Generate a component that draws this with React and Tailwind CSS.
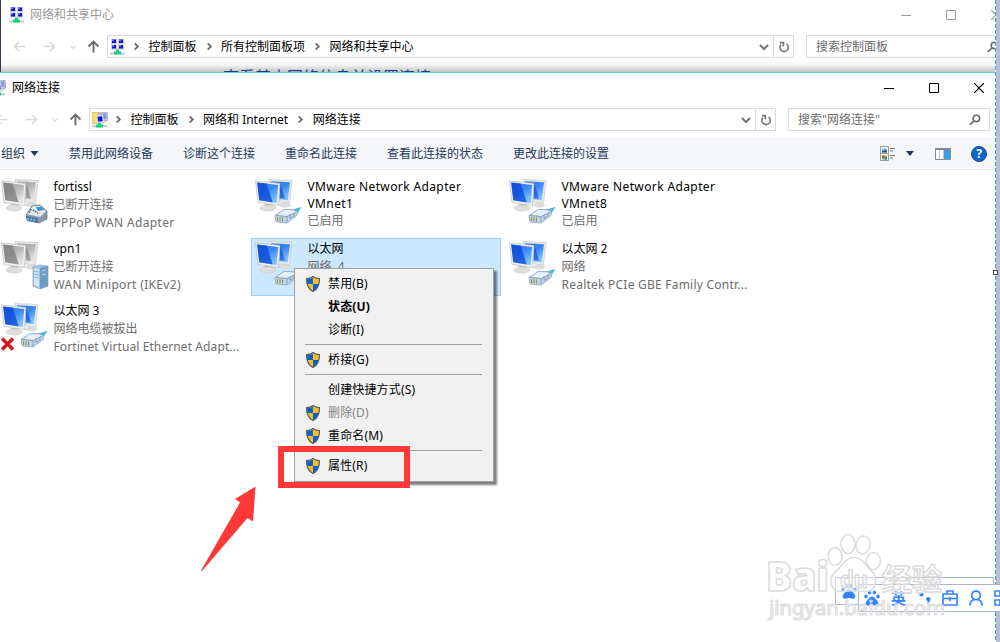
import clsx from "clsx";

const adapters = [
  { name: "fortissl", status: "已断开连接", device: "PPPoP WAN Adapter", kind: "phone" },
  { name: "VMware Network Adapter VMnet1", status: "已启用", kind: "cable" },
  { name: "VMware Network Adapter VMnet8", status: "已启用", kind: "cable" },
  { name: "vpn1", status: "已断开连接", device: "WAN Miniport (IKEv2)", kind: "server" },
  { name: "以太网", status: "网络  4", device: "", kind: "cable", selected: true },
  { name: "以太网 2", status: "网络", device: "Realtek PCIe GBE Family Contr...", kind: "cable", tracking: "tracking-[0.23px]" },
  { name: "以太网 3", status: "网络电缆被拔出", device: "Fortinet Virtual Ethernet Adapt...", kind: "cable", tracking: "tracking-[0.1px]", unplugged: true },
];

const menuItems = [
  { label: "禁用(B)", shield: true },
  { label: "状态(U)", bold: true },
  { label: "诊断(I)" },
  null,
  { label: "桥接(G)", shield: true },
  null,
  { label: "创建快捷方式(S)" },
  { label: "删除(D)", shield: true, disabled: true },
  { label: "重命名(M)", shield: true },
  null,
  { label: "属性(R)", shield: true },
];

const NetworkIcon = () => (
  <svg className="w-4 h-4 shrink-0" viewBox="0 0 16 16">
    {[[1, 0], [8, 0], [1, 5.5], [8, 5.5]].map(([x, y]) => (
      <g key={`${x}-${y}`}>
        <rect x={x} y={y} width="6.300" height="5" fill="#c9ccd6" />
        <rect x={x + 1} y={y + 0.5} width="4" height="3.500" fill="#1818c4" />
        <rect x={x + 1} y={y + 0.5} width="2" height="1.500" fill="#6f83e8" />
      </g>
    ))}
    <path d="M0 13.500h15v2H0z" fill="#c4c8cc" />
    <path d="M6 10.500h3v2h2v3H4v-3h2z" fill="#14cf80" />
  </svg>
);

const ConnectionsIcon = ({ className }) => (
  <svg className={clsx("w-4 h-4 shrink-0", className)} viewBox="0 0 16 16">
    <path d="M0 .5h7v11H0z" fill="#f5dc78" stroke="#d9b84c" strokeWidth=".7" />
    <path d="M6 1l9-1 .8 8-6 3-3-2z" fill="#bfc4d0" stroke="#8e94a3" strokeWidth=".6" />
    <path d="M9 2l5-.6.5 5-5 1.400z" fill="#7e97e8" />
    <path d="M4 3.500l7-1 1 7.500-7 1.200z" fill="#d9dce6" />
    <path d="M5.500 4.800l4.500-.6.700 4.800-4.500.7z" fill="#1519cb" />
    <path d="M0 13.200h15v2H0z" fill="#c4c8cc" />
    <path d="M6 11h3v1.500h2v3H4v-3h2z" fill="#14cf80" />
  </svg>
);

const ArrowIcon = ({ dir, className }) => (
  <svg className={clsx("w-[13px] h-[13px] shrink-0", className)} viewBox="0 0 13 13" fill="none" stroke="currentColor" strokeWidth="1.500">
    {dir === "left" && <path d="M12.500 6.500H1.500M6 2L1.500 6.500 6 11" />}
    {dir === "right" && <path d="M.5 6.500h11M7 2l4.500 4.500L7 11" />}
    {dir === "up" && <path d="M6.500 12.500V1.500M1.500 6.500l5-5 5 5" strokeWidth="1.900" />}
  </svg>
);

const Chevron = ({ down, className }) => (
  <svg className={clsx("shrink-0", className)} viewBox="0 0 10 10" fill="none" stroke="currentColor" strokeWidth="2">
    {down ? <path d="M1 3l4 4 4-4" /> : <path d="M3 1.500L6.500 5 3 8.500" />}
  </svg>
);

const RefreshIcon = () => (
  <svg className="w-3 h-3" viewBox="0 0 12 12" fill="none" stroke="#757575" strokeWidth="1.600">
    <path d="M8.500 2.900A4.200 4.200 0 1 1 3 3.600" />
    <path d="M1.800 1.600h3.600v3.800" />
  </svg>
);

const SearchIcon = () => (
  <svg className="w-3 h-3 shrink-0" viewBox="0 0 12 12" fill="none" stroke="#6b6b6b" strokeWidth="1.600">
    <circle cx="7.400" cy="4.400" r="3.200" />
    <path d="M5 6.900L.8 11" />
  </svg>
);

const WindowButtons = ({ className }) => (
  <div className={clsx("flex items-center gap-[35px]", className)}>
    <svg className="w-[10px] h-[10px] shrink-0" viewBox="0 0 10 10" stroke="currentColor"><path d="M0 5.500h10" /></svg>
    <svg className="w-[10px] h-[10px] shrink-0" viewBox="0 0 10 10" fill="none" stroke="currentColor"><path d="M.5.5h9v9h-9z" /></svg>
    <svg className="w-[10px] h-[10px] shrink-0" viewBox="0 0 10 10" stroke="currentColor" strokeWidth="1.200"><path d="M0 0l10 10M10 0L0 10" /></svg>
  </div>
);

const AddressBar = ({ icon, crumbs, search, searchClass }) => (
  <div className="flex h-[23px] shrink-0 items-center">
    <div className="flex w-[107px] shrink-0 items-center text-[#d8d8d8]">
      <ArrowIcon dir="left" className="ml-[13px]" />
      <ArrowIcon dir="right" className="ml-[17px]" />
      <Chevron down className="ml-[14px] h-[6px] w-[6px]" />
      <ArrowIcon dir="up" className="ml-[11px] text-[#6d6d6d]" />
    </div>
    <div className="flex h-[23px] w-[687px] shrink-0 border border-[#d9d9d9] bg-white">
      <div className="flex flex-1 items-center pl-[2px]">
        {icon}
        {crumbs.map((crumb) => (
          <div key={crumb} className="flex items-center">
            <Chevron className="ml-[6px] mr-[7.500px] h-[9px] w-[9px] text-[#6d6d6d]" />
            <span className="mr-[2px] whitespace-nowrap">{crumb}</span>
          </div>
        ))}
      </div>
      <div className="flex w-[19px] items-center justify-center">
        <Chevron down className="h-[10px] w-[10px] text-[#757575]" />
      </div>
      <div className="flex w-5 items-center justify-center border-l border-[#d9d9d9]">
        <RefreshIcon />
      </div>
    </div>
    <div className={clsx("ml-3 flex h-[23px] shrink-0 items-center justify-between border border-[#d9d9d9] pl-[9px] pr-[8px] text-[#6d6d6d]", searchClass)}>
      <span>{search}</span>
      <SearchIcon />
    </div>
  </div>
);

const Shield = () => (
  <svg className="h-4 w-4" viewBox="0 0 16 16">
    <path d="M8 .5c2 1.500 4 2 6.500 2.200C14.500 9 13 13 8 15.500 3 13 1.500 9 1.500 2.700 4 2.500 6 2 8 .5z" fill="#f9b92c" stroke="#555b61" strokeWidth="1.200" />
    <path d="M7.900 1.500V8H2.400C2.100 6.500 2 5 2 3.300c2-.2 4-.7 5.900-1.800z" fill="#0b62c4" />
    <path d="M8 8h5.600c-.7 3.200-2.500 5.300-5.600 6.900z" fill="#0b62c4" />
  </svg>
);

const Plug = () => (
  <g>
    <path d="M38 33.500q4-3 9.500-3.500l-3 4.500-4 2z" fill="#46b9dc" />
    <path d="M21 38.500l9-6h9l5 2-1 4-10 7.500-11-1z" fill="#c3d5e8" stroke="#7f9cbd" strokeWidth=".7" />
    <path d="M30 33l8 .5 4 1.500-8 4-10-1z" fill="#e6f0f9" />
    <path d="M22 38.500l11 1 9.500-4.500M33 40v5M36 37.500v4l4-2.500v-3" fill="none" stroke="#7491b3" strokeWidth=".8" />
    <path d="M23.500 40v4M26 40.200v4M28.500 40.500v4" stroke="#8f9a52" strokeWidth="1.200" />
  </g>
);

const Phone = () => (
  <g>
    <path d="M26 38l6-9 8-1 7 6v8l-8 4-12-3z" fill="#8d9aa6" stroke="#5e6d7b" strokeWidth=".7" />
    <path d="M27 37l6-8 7 0 6 5-6 6z" fill="#e2e8ec" />
    <path d="M36 30l6 0 2 3-6 1z" fill="#2f95da" />
    <path d="M31 32l-2 4M33 33l5 3" stroke="#4a535d" strokeWidth="1.500" strokeDasharray="1.500 1" />
    <path d="M26 39l12 2v5l-11-2z" fill="#497ca6" />
    <path d="M28 41v2M31 41.500v2M34 42v2" stroke="#a9e1ff" />
  </g>
);

const Server = () => (
  <g>
    <path d="M33 28l7-2 8 1v20l-8 3-7-3z" fill="#9fc4df" stroke="#7897b1" strokeWidth=".6" />
    <path d="M40 29l8-2v20l-8 3z" fill="#6d9cc4" />
    <path d="M34 29l5 1v18l-5-2z" fill="#d4e8f4" />
    <path d="M34 32l5 1M34 35l5 1M34 38l5 1" stroke="#6f9ec0" strokeWidth=".8" />
    <path d="M42 32l4-1M42 36l4-1" stroke="#b8d9ef" />
  </g>
);

const AdapterIcon = ({ kind, unplugged }) => {
  const off = kind !== "cable";
  const id = off ? "screenOff" : "screenOn";
  return (
    <svg className="h-[52px] w-[52px] shrink-0 overflow-visible" viewBox="0 0 52 52">
      <defs>
        <linearGradient id="screenOn" x1="0" y1="0" x2=".6" y2="1">
          <stop offset="0" stopColor="#2f7cf0" />
          <stop offset=".5" stopColor="#3b86f6" />
          <stop offset="1" stopColor="#7fc4ff" />
        </linearGradient>
        <linearGradient id="screenOff" x1="0" y1="0" x2=".6" y2="1">
          <stop offset="0" stopColor="#a2a2a2" />
          <stop offset=".5" stopColor="#b5b5b5" />
          <stop offset="1" stopColor="#e4e4e4" />
        </linearGradient>
      </defs>
      <ellipse cx="31" cy="28" rx="6" ry="2.500" fill="#dcdcdc" />
      <path d="M15 2.500l23 1-2.500 22.500-19-2z" fill="#e9eae8" stroke="#c6c8c6" strokeWidth=".7" />
      <path d="M17 4.300l19 1-2.200 18-16-2z" fill={`url(#${id})`} />
      <path d="M26 4.800l5 17-5-.5z" fill={off ? "#777" : "#0a46d4"} opacity=".6" />
      <path d="M11 27h7l1 4H9z" fill="#b9bab9" />
      <ellipse cx="14" cy="31" rx="8" ry="3" fill="#dedfdd" stroke="#c6c7c6" strokeWidth=".6" />
      <path d="M1.500 3.800l24.500 2.700L24.500 28.500 4 25.500z" fill="#f0f1ef" stroke="#bbbdbb" strokeWidth=".7" />
      <path d="M3.200 5.500l21 2.400L22.700 26 5.300 23.300z" fill={`url(#${id})`} />
      <path d="M3.200 5.500l9.500 1.100 6 18.800L5.300 23.300z" fill={off ? "#7c7c7c" : "#0a46d4"} opacity=".75" />
      {kind === "cable" && <Plug />}
      {kind === "phone" && <Phone />}
      {kind === "server" && <Server />}
      {unplugged && <path d="M2 37.500l11 11M13 37.500L2 48.500" stroke="#d9151b" strokeWidth="3.400" />}
    </svg>
  );
};

const Adapter = ({ name, status, device, kind, selected, unplugged, tracking = "tracking-[0.35px]" }) => (
  <div className={clsx("flex h-[58px] border pl-[2px]", selected ? "border-[#99d1ff] bg-[#cce8ff]" : "border-transparent")}>
    <AdapterIcon kind={kind} unplugged={unplugged} />
    <div className="ml-[1.500px] w-[190px] pt-px text-[12px] leading-[18px] text-[#6d6d6d]">
      <div className={clsx("text-black", name.length > 20 && "leading-[17px] tracking-[0.38px]")}>{name}</div>
      <div className="whitespace-pre">{status}</div>
      <div className={clsx("whitespace-nowrap", tracking)}>{device}</div>
    </div>
  </div>
);

const ContextMenu = () => (
  <div className="absolute left-[294px] top-[268px] w-[200px] border border-[#a0a0a0] bg-[#f1f1f1] pb-[4px] pt-[3px] text-[12px] text-black shadow-[3px_3px_2px_rgba(0,0,0,0.5)]">
    {menuItems.map((item, i) =>
      item ? (
        <div key={item.label} className={clsx("flex h-[23px] items-center", item.bold && "font-bold", item.disabled && "text-[#858585]")}>
          <div className="ml-[10px] w-[23px]">{item.shield && <Shield />}</div>
          <span className="pt-px tracking-[0.15px]">{item.label}</span>
        </div>
      ) : (
        <div key={i} className="ml-[10px] mr-[11px] flex h-[7px] items-center">
          <div className="h-px w-full bg-[#a0a0a0]" />
        </div>
      )
    )}
  </div>
);

const Paw = ({ className }) => (
  <svg className={className} viewBox="0 0 16 16" fill="currentColor">
    <ellipse cx="2" cy="6.500" rx="1.700" ry="2" />
    <ellipse cx="5.500" cy="2.500" rx="1.700" ry="2" />
    <ellipse cx="10.500" cy="2.500" rx="1.700" ry="2" />
    <ellipse cx="14" cy="6.500" rx="1.700" ry="2" />
    <path d="M8 6.500c2 0 3 2 5 4s1.800 5.200-1 5.200-2.500-.6-4-.6-1.200.6-4 .6-3-3.200-1-5.200 3-4 5-4z" />
  </svg>
);

const InputMethodBar = () => (
  <>
    <div className="absolute left-[835px] top-[577px] h-[28px] w-[159px] border border-[#a9b6cf] bg-white text-[#3385ff]">
      <Paw className="ml-[5px] mt-[5px] h-4 w-4" />
    </div>
    <div className="absolute left-[858px] top-[584px] flex h-[28px] w-[142px] items-center overflow-hidden border border-r-0 border-[#a9b6cf] bg-white pl-[5px] text-[#3385ff]">
      <Paw className="h-4 w-4 shrink-0" />
      <span className="ml-[11px] text-[15px] font-bold leading-none">英</span>
      <svg className="ml-[13px] h-4 w-4 shrink-0" viewBox="0 0 16 16" fill="currentColor">
        <circle cx="2.500" cy="4.500" r="2.100" />
        <path d="M7.500 7.500q3.500-1.500 4 1.500 0 3-3.800 4.500 1.200-1.500 1-2.500-2.500-.5-1.200-3.500z" />
      </svg>
      <svg className="ml-[7px] h-4 w-4 shrink-0" viewBox="0 0 16 16" fill="none" stroke="currentColor" strokeWidth="1.700">
        <path d="M1 4h14v11H1zM5 4V1h6v3M1 8.500h14M8 7v4" />
      </svg>
      <svg className="ml-[10px] h-4 w-4 shrink-0" viewBox="0 0 16 16" fill="none" stroke="currentColor" strokeWidth="1.800">
        <circle cx="8" cy="5.300" r="4.300" />
        <path d="M1.800 15.500q.5-5 4.500-6.200M14.200 15.500q-.5-5-4.500-6.200" />
      </svg>
      <svg className="ml-[10px] h-4 w-4 shrink-0" viewBox="0 0 16 16" fill="none" stroke="currentColor" strokeWidth="1.700">
        <path d="M1 1h5v5H1zM1 10h5v5H1zM10 1h5v5h-5zM10 10h5v5h-5z" />
      </svg>
    </div>
  </>
);

const Watermark = () => (
  <svg className="absolute left-[760px] top-[525px] h-[100px] w-[200px] overflow-visible" viewBox="0 0 200 100" fill="#fff" fillOpacity=".35" stroke="#dcdcdc" strokeWidth="1.600" strokeLinejoin="round" fontFamily="'Noto Sans', 'Noto Sans CJK SC', sans-serif" fontWeight="bold">
    <ellipse cx="75" cy="31.500" rx="7" ry="9" />
    <ellipse cx="88" cy="19" rx="7" ry="9.500" />
    <ellipse cx="103" cy="20" rx="7" ry="9" transform="rotate(12 103 20)" />
    <ellipse cx="113.500" cy="36" rx="7" ry="8.500" />
    <path d="M94 32.500c9 0 12 9 18 14s5 20-6 20c-6 0-8-1-12-1s-8 1-13 1c-11 0-13-13-6-19s10-15 19-15z" />
    <text x="6" y="66" fontSize="41" fontWeight="900" textLength="63" lengthAdjust="spacingAndGlyphs">Bai</text>
    <text x="80" y="63" fontSize="23" textLength="28" lengthAdjust="spacingAndGlyphs">du</text>
    <text x="122" y="65" fontSize="30">经验</text>
    <text x="9" y="90" fontSize="20" strokeWidth="1.200" fontWeight="normal" textLength="176" lengthAdjust="spacingAndGlyphs">jingyan.baidu.com</text>
  </svg>
);

const BackWindow = () => (
  <div className="flex h-[72px] flex-col overflow-hidden border-l border-[#2d3c55] bg-white">
    <div className="-ml-px flex h-[29px] shrink-0 items-center pl-[9px] text-[#999]">
      <NetworkIcon />
      <span className="ml-[5px]">网络和共享中心</span>
      <WindowButtons className="ml-auto mr-[-6px]" />
    </div>
    <div className="-ml-px mt-[6px]">
      <AddressBar
        icon={<NetworkIcon />}
        crumbs={["控制面板", "所有控制面板项", "网络和共享中心"]}
        search="搜索控制面板"
        searchClass="w-[202px]"
      />
    </div>
    <div className="h-[14px] shrink-0 overflow-hidden bg-linear-to-b from-white via-[#f4f4f4] to-[#c4c4c4] pl-[222px] pt-[9px] text-[16px] leading-[20px] text-[#1a3c8c]">
      查看基本网络信息并设置连接
    </div>
  </div>
);

const Toolbar = () => (
  <div className="flex h-[32px] items-center border-b border-[#e8eaed] bg-[#f4f6f9] pl-[1px] text-[#1e395b]">
    <span>组织</span>
    <svg className="ml-[5px] h-[5px] w-[9px]" viewBox="0 0 8 5" fill="#1e395b"><path d="M0 0h8L4 5z" /></svg>
    <div className="ml-[30px] flex gap-[30px]">
      <span>禁用此网络设备</span>
      <span>诊断这个连接</span>
      <span>重命名此连接</span>
      <span>查看此连接的状态</span>
      <span>更改此连接的设置</span>
    </div>
    <div className="ml-auto mr-[8px] flex items-center">
      <svg className="h-4 w-4" viewBox="0 0 16 16" fill="none">
        <path d="M.5.5h8v14h-8zM.5 7.500h8" fill="#fff" stroke="#9a9a9a" />
        <path d="M2 2.500h5v4H2z" fill="#7cb8e8" />
        <path d="M2 5l5-1v2.500H2z" fill="#21537c" />
        <path d="M2 9.500h5v4H2z" fill="#76b83f" />
        <path d="M2 9.500h2.500v2H2z" fill="#e3443a" />
        <path d="M4.500 11.500H7v2H4.500z" fill="#3878d8" />
        <path d="M10 2.500h5M10 5h3M10 9.500h5M10 12h3" stroke="#777" />
      </svg>
      <svg className="ml-[10px] h-[5px] w-[8px]" viewBox="0 0 8 5" fill="#1e395b"><path d="M0 0h8L4 5z" /></svg>
      <svg className="ml-[21px] h-[12px] w-[16px]" viewBox="0 0 16 12">
        <path d="M.5.5h15v11H.5z" fill="#fff" stroke="#868b92" />
        <path d="M0 0h16v2H0z" fill="#868b92" />
        <path d="M9 2h6v9H9z" fill="#3d9ae8" />
        <path d="M4.500 2v9M8.500 2v9" stroke="#c3c6ca" />
      </svg>
      <div className="ml-[20px] flex h-4 w-4 items-center justify-center rounded-full border border-[#15467e] bg-[#0868cf] text-[12px] font-bold text-white">?</div>
    </div>
  </div>
);

const FrontWindow = () => (
  <div className="flex flex-1 flex-col overflow-hidden border-t border-[#4fd0d8] bg-white">
    <div className="flex h-[29px] items-center text-black">
      <ConnectionsIcon className="-ml-[10px]" />
      <span className="ml-[6px]">网络连接</span>
      <WindowButtons className="ml-auto mr-[11px]" />
    </div>
    <div className="-ml-[18px] mt-[6px]">
      <AddressBar
        icon={<ConnectionsIcon />}
        crumbs={["控制面板", "网络和 Internet", "网络连接"]}
        search={'搜索"网络连接"'}
        searchClass="w-[202px]"
      />
    </div>
    <div className="mt-[7px]">
      <Toolbar />
    </div>
    <div className="-ml-[3px] mt-[6px] grid grid-cols-[250px_250px_250px] gap-1">
      {adapters.map((adapter) => (
        <Adapter key={adapter.name} {...adapter} />
      ))}
    </div>
  </div>
);

const App = () => (
  <div className="relative flex h-[642px] w-[1000px] overflow-hidden bg-white font-['Noto_Sans','Noto_Sans_CJK_SC',sans-serif] text-[12px] leading-[18px] text-black">
    <div className="flex w-[995px] flex-col">
      <BackWindow />
      <FrontWindow />
    </div>
    <div className="w-px bg-[repeating-linear-gradient(to_bottom,#4593e6_0_4px,#fff_4px_6px)]" />
    <div className="w-1 bg-[#b4c0d6]" />
    <div className="absolute left-[993px] top-[270px] h-[5px] w-[5px] border border-[#444] bg-white" />

    <ContextMenu />
    <div className="absolute left-[278px] top-[446px] h-[42px] w-[132px] border-[6px] border-[#ff3838]" />
    <svg className="absolute left-[195px] top-[480px] h-[95px] w-[70px]" viewBox="0 0 70 95" fill="#ff3838">
      <path d="M60.500 6.500L40 19l5 3.500L6 90.500l1 .5 45.500-53 5.500 3.500z" />
    </svg>
    <InputMethodBar />
    <Watermark />
  </div>
);

export default App;
